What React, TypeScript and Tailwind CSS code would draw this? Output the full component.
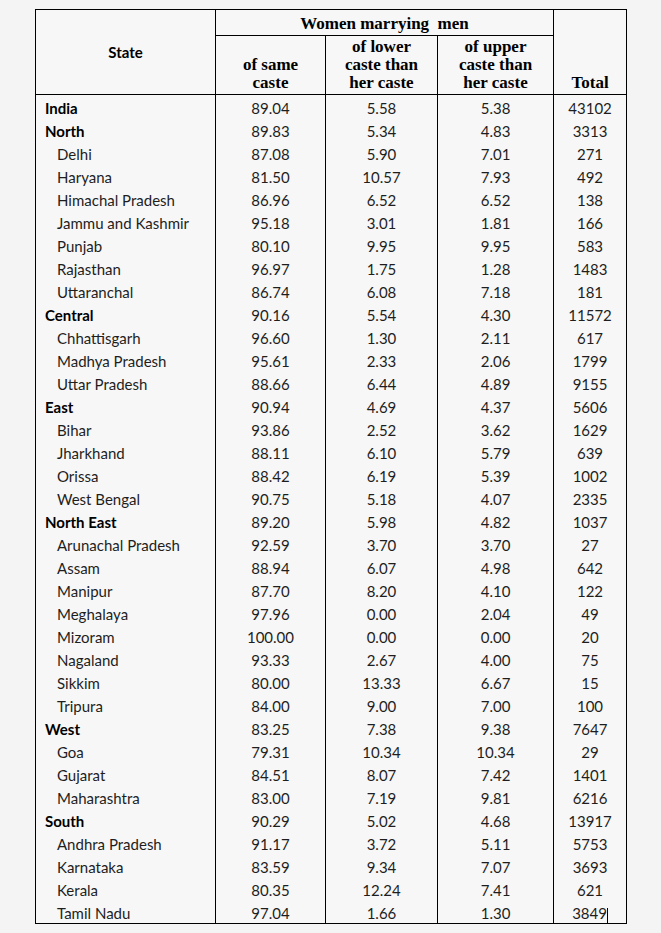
type Row = {
  name: string;
  same: string;
  lower: string;
  upper: string;
  total: string;
  region?: boolean;
};

const rows: Row[] = [
  { name: "India", same: "89.04", lower: "5.58", upper: "5.38", total: "43102", region: true },
  { name: "North", same: "89.83", lower: "5.34", upper: "4.83", total: "3313", region: true },
  { name: "Delhi", same: "87.08", lower: "5.90", upper: "7.01", total: "271" },
  { name: "Haryana", same: "81.50", lower: "10.57", upper: "7.93", total: "492" },
  { name: "Himachal Pradesh", same: "86.96", lower: "6.52", upper: "6.52", total: "138" },
  { name: "Jammu and Kashmir", same: "95.18", lower: "3.01", upper: "1.81", total: "166" },
  { name: "Punjab", same: "80.10", lower: "9.95", upper: "9.95", total: "583" },
  { name: "Rajasthan", same: "96.97", lower: "1.75", upper: "1.28", total: "1483" },
  { name: "Uttaranchal", same: "86.74", lower: "6.08", upper: "7.18", total: "181" },
  { name: "Central", same: "90.16", lower: "5.54", upper: "4.30", total: "11572", region: true },
  { name: "Chhattisgarh", same: "96.60", lower: "1.30", upper: "2.11", total: "617" },
  { name: "Madhya Pradesh", same: "95.61", lower: "2.33", upper: "2.06", total: "1799" },
  { name: "Uttar Pradesh", same: "88.66", lower: "6.44", upper: "4.89", total: "9155" },
  { name: "East", same: "90.94", lower: "4.69", upper: "4.37", total: "5606", region: true },
  { name: "Bihar", same: "93.86", lower: "2.52", upper: "3.62", total: "1629" },
  { name: "Jharkhand", same: "88.11", lower: "6.10", upper: "5.79", total: "639" },
  { name: "Orissa", same: "88.42", lower: "6.19", upper: "5.39", total: "1002" },
  { name: "West Bengal", same: "90.75", lower: "5.18", upper: "4.07", total: "2335" },
  { name: "North East", same: "89.20", lower: "5.98", upper: "4.82", total: "1037", region: true },
  { name: "Arunachal Pradesh", same: "92.59", lower: "3.70", upper: "3.70", total: "27" },
  { name: "Assam", same: "88.94", lower: "6.07", upper: "4.98", total: "642" },
  { name: "Manipur", same: "87.70", lower: "8.20", upper: "4.10", total: "122" },
  { name: "Meghalaya", same: "97.96", lower: "0.00", upper: "2.04", total: "49" },
  { name: "Mizoram", same: "100.00", lower: "0.00", upper: "0.00", total: "20" },
  { name: "Nagaland", same: "93.33", lower: "2.67", upper: "4.00", total: "75" },
  { name: "Sikkim", same: "80.00", lower: "13.33", upper: "6.67", total: "15" },
  { name: "Tripura", same: "84.00", lower: "9.00", upper: "7.00", total: "100" },
  { name: "West", same: "83.25", lower: "7.38", upper: "9.38", total: "7647", region: true },
  { name: "Goa", same: "79.31", lower: "10.34", upper: "10.34", total: "29" },
  { name: "Gujarat", same: "84.51", lower: "8.07", upper: "7.42", total: "1401" },
  { name: "Maharashtra", same: "83.00", lower: "7.19", upper: "9.81", total: "6216" },
  { name: "South", same: "90.29", lower: "5.02", upper: "4.68", total: "13917", region: true },
  { name: "Andhra Pradesh", same: "91.17", lower: "3.72", upper: "5.11", total: "5753" },
  { name: "Karnataka", same: "83.59", lower: "9.34", upper: "7.07", total: "3693" },
  { name: "Kerala", same: "80.35", lower: "12.24", upper: "7.41", total: "621" },
  { name: "Tamil Nadu", same: "97.04", lower: "1.66", upper: "1.30", total: "3849" },
];

const cell = "h-[23px] pt-[4px] leading-[19px] text-center border-x border-black p-0 align-top";
const sub =
  "border border-black align-bottom p-0 pb-[2px] leading-[18px] text-[17px] font-bold text-black font-['Liberation_Serif',serif]";

export default function App() {
  return (
    <div className="min-h-screen bg-[#f4f4f4] pt-[9px] pl-[35px]">
      <table className="table-fixed border-collapse border border-black bg-[#f7f7f7] w-[592px] text-[15px] text-[#1e1e1e] font-['Lato','Liberation_Sans',sans-serif]">
        <colgroup>
          <col className="w-[180px]" />
          <col className="w-[110px]" />
          <col className="w-[112px]" />
          <col className="w-[116px]" />
          <col className="w-[73px]" />
        </colgroup>
        <thead>
          <tr className="h-[26px]">
            <th rowSpan={2} className="border border-black align-middle p-0 font-bold text-black">
              State
            </th>
            <th colSpan={3} className={`${sub} pb-[1px] whitespace-pre`}>
              Women marrying  men
            </th>
            <th rowSpan={2} className={sub}>
              Total
            </th>
          </tr>
          <tr className="h-[59px]">
            <th className={sub}>
              of same
              <br />
              caste
            </th>
            <th className={sub}>
              of lower
              <br />
              caste than
              <br />
              her caste
            </th>
            <th className={sub}>
              of upper
              <br />
              caste than
              <br />
              her caste
            </th>
          </tr>
        </thead>
        <tbody>
          {rows.map((r, i) => (
            <tr key={r.name}>
              <td
                className={`h-[23px] pt-[4px] leading-[19px] border-x border-black p-0 align-top whitespace-nowrap ${
                  r.region ? "pl-[9px] font-bold text-black" : "pl-[21px]"
                }`}
              >
                {r.name}
              </td>
              <td className={cell}>{r.same}</td>
              <td className={cell}>{r.lower}</td>
              <td className={cell}>{r.upper}</td>
              <td className={cell}>
                {r.total}
                {i === rows.length - 1 && (
                  <span className="inline-block w-px h-[15px] bg-black align-[-4px]" />
                )}
              </td>
            </tr>
          ))}
        </tbody>
      </table>
    </div>
  );
}
